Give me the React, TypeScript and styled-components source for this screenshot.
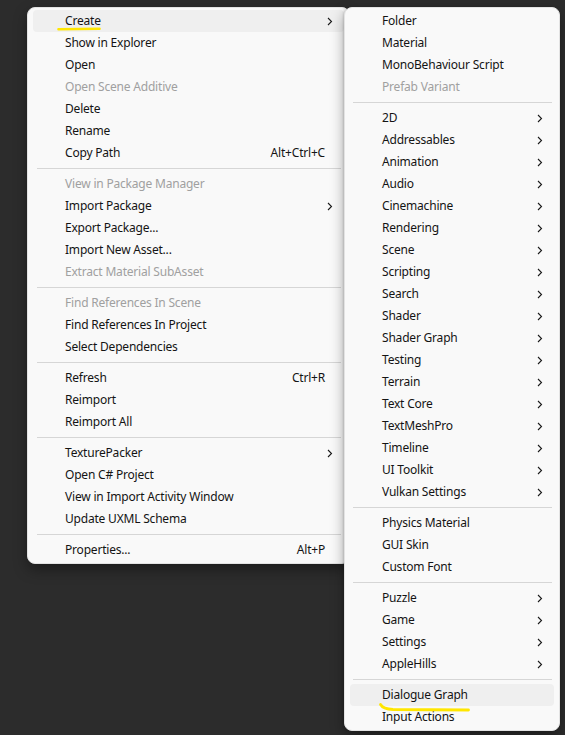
import React from "react";
import styled, { createGlobalStyle } from "styled-components";

const Global = createGlobalStyle`
  html, body { margin: 0; padding: 0; background: #2c2c2c; }
  body { width: 565px; height: 735px; overflow: hidden; font-family: "Noto Sans", "Open Sans", sans-serif; }
`;

const Stage = styled.div`
  position: relative;
  width: 565px;
  height: 735px;
  padding: 7px 0 0 27px;
  box-sizing: border-box;
`;

const Menu = styled.div<{ $w: number }>`
  width: ${(p) => p.$w}px;
  box-sizing: border-box;
  background: #f9f9f9;
  border: 1px solid #e3e3e3;
  border-radius: 8px;
  padding: 2px 5px;
  box-shadow: 0 6px 14px rgba(0, 0, 0, 0.35);
  display: flex;
  flex-direction: column;
`;

const SubMenu = styled(Menu)`
  position: absolute;
  left: 344px;
  top: 7px;
  box-shadow: -1px 0 2px rgba(0, 0, 0, 0.12), 0 6px 14px rgba(0, 0, 0, 0.35);
`;

const Row = styled.div<{ $hover?: boolean; $disabled?: boolean }>`
  position: relative;
  height: 22px;
  display: flex;
  align-items: center;
  padding: 0 9px 0 32px;
  border-radius: 4px;
  background: ${(p) => (p.$hover ? "#efefef" : "transparent")};
  color: ${(p) => (p.$disabled ? "#a0a0a0" : "#141414")};
  font-size: 12px;
  letter-spacing: -0.2px;
  line-height: 22px;
  white-space: nowrap;
`;

const Label = styled.span`
  flex: 1;
`;

const Shortcut = styled.span`
  text-align: right;
`;

const Trail = styled.span`
  width: 10px;
  display: flex;
  justify-content: center;
  align-items: center;
`;

const Sep = styled.div<{ $l: number; $r: number }>`
  height: 9px;
  display: flex;
  align-items: center;
  margin: 0 ${(p) => p.$r}px 0 ${(p) => p.$l}px;
  &::after {
    content: "";
    flex: 1;
    height: 1px;
    background: #d6d6d6;
  }
`;

const Mark = styled.svg<{ $l: number; $t: number }>`
  position: absolute;
  left: ${(p) => p.$l}px;
  top: ${(p) => p.$t}px;
  overflow: visible;
  z-index: 2;
  pointer-events: none;
`;

const Chevron = () => (
  <svg width="6" height="9" viewBox="0 0 6 9">
    <path d="M1 1 L4.5 4.5 L1 8" fill="none" stroke="#1a1a1a" strokeWidth="1.1" />
  </svg>
);

type Item =
  | { sep: true }
  | { t: string; d?: boolean; k?: string; sub?: boolean; hover?: boolean; mark?: "create" | "dialogue" };

const left: Item[] = [
  { t: "Create", sub: true, hover: true, mark: "create" },
  { t: "Show in Explorer" },
  { t: "Open" },
  { t: "Open Scene Additive", d: true },
  { t: "Delete" },
  { t: "Rename" },
  { t: "Copy Path", k: "Alt+Ctrl+C" },
  { sep: true },
  { t: "View in Package Manager", d: true },
  { t: "Import Package", sub: true },
  { t: "Export Package..." },
  { t: "Import New Asset..." },
  { t: "Extract Material SubAsset", d: true },
  { sep: true },
  { t: "Find References In Scene", d: true },
  { t: "Find References In Project" },
  { t: "Select Dependencies" },
  { sep: true },
  { t: "Refresh", k: "Ctrl+R" },
  { t: "Reimport" },
  { t: "Reimport All" },
  { sep: true },
  { t: "TexturePacker", sub: true },
  { t: "Open C# Project" },
  { t: "View in Import Activity Window" },
  { t: "Update UXML Schema" },
  { sep: true },
  { t: "Properties...", k: "Alt+P" },
];

const right: Item[] = [
  { t: "Folder" },
  { t: "Material" },
  { t: "MonoBehaviour Script" },
  { t: "Prefab Variant", d: true },
  { sep: true },
  ...[
    "2D",
    "Addressables",
    "Animation",
    "Audio",
    "Cinemachine",
    "Rendering",
    "Scene",
    "Scripting",
    "Search",
    "Shader",
    "Shader Graph",
    "Testing",
    "Terrain",
    "Text Core",
    "TextMeshPro",
    "Timeline",
    "UI Toolkit",
    "Vulkan Settings",
  ].map((t) => ({ t, sub: true })),
  { sep: true },
  { t: "Physics Material" },
  { t: "GUI Skin" },
  { t: "Custom Font" },
  { sep: true },
  ...["Puzzle", "Game", "Settings", "AppleHills"].map((t) => ({ t, sub: true })),
  { sep: true },
  { t: "Dialogue Graph", hover: true, mark: "dialogue" as const },
  { t: "Input Actions" },
];

const Marker = ({ kind }: { kind: "create" | "dialogue" }) =>
  kind === "create" ? (
    <Mark $l={24} $t={17} width={44} height={4} viewBox="0 0 44 4">
      <path d="M1.5 2.2 L42.5 1.8" stroke="#ffe600" strokeWidth="2.6" strokeLinecap="round" fill="none" />
    </Mark>
  ) : (
    <Mark $l={29} $t={19} width={92} height={9} viewBox="0 0 92 9">
      <path d="M1.5 1.5 Q4 6 14 6.5 L89.5 7" stroke="#ffe600" strokeWidth="2.8" strokeLinecap="round" fill="none" />
    </Mark>
  );

const renderItems = (items: Item[], sl: number, sr: number) =>
  items.map((it, i) =>
    "sep" in it ? (
      <Sep key={i} $l={sl} $r={sr} />
    ) : (
      <Row key={i} $hover={it.hover} $disabled={it.d}>
        <Label>{it.t}</Label>
        {it.k && <Shortcut>{it.k}</Shortcut>}
        <Trail>{it.sub && <Chevron />}</Trail>
        {it.mark && <Marker kind={it.mark} />}
      </Row>
    )
  );

export default function App() {
  return (
    <>
      <Global />
      <Stage>
        <Menu $w={323}>{renderItems(left, 4, 3)}</Menu>
        <SubMenu $w={216}>{renderItems(right, 3, 2)}</SubMenu>
      </Stage>
    </>
  );
}
